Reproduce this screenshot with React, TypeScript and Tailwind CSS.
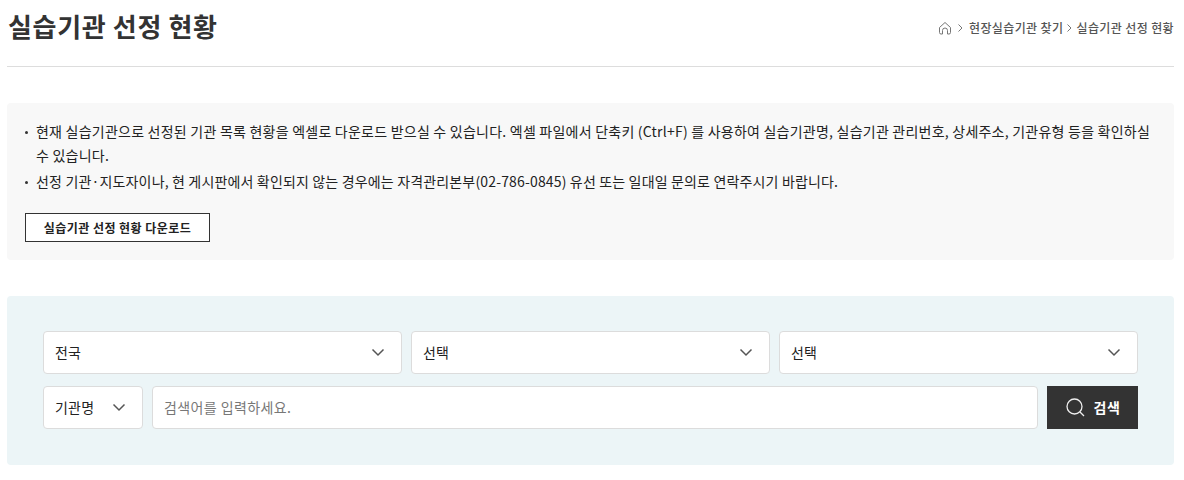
import React from "react";

const Chevron = ({ className }: { className?: string }) => (
  <svg className={className} width="14" height="9" viewBox="0 0 14 9" fill="none" stroke="#555" strokeWidth="1.5">
    <path d="M1.5 1.5 L7 7 L12.5 1.5" />
  </svg>
);

const Select = ({ label }: { label: string }) => (
  <div className="flex h-[43px] flex-1 items-center justify-between rounded-[4px] border border-[#dcdcdc] bg-white pl-[11px] pr-[16px] text-[14px] tracking-[0.2px] text-[#222]">
    <span>{label}</span>
    <Chevron />
  </div>
);

export default function App() {
  return (
    <div className="h-[480px] overflow-hidden bg-white px-[7px] pr-[10px] font-['Noto_Sans_CJK_KR','Noto_Sans',sans-serif] text-[#333]">
      <header className="flex h-[67px] items-start justify-between border-b border-[#dddddd]">
        <h1 className="pl-[1px] pt-[4px] text-[26px] font-bold leading-[44px] tracking-[0.65px] text-[#333]">실습기관 선정 현황</h1>
        <nav className="flex items-center pt-[19px] text-[12px] font-medium leading-[18px] tracking-[0.38px] text-[#555]">
          <svg width="14" height="14" viewBox="0 0 14 14" fill="none" stroke="#777" strokeWidth="1" className="mr-[6px]">
            <path d="M1.5 6.5 L7 1.5 L12.5 6.5 V11.5 Q12.5 13 11 13 H9.5 V9.5 Q9.5 7 7 7 Q4.5 7 4.5 9.5 V13 H3 Q1.5 13 1.5 11.5 Z" />
          </svg>
          <svg width="5" height="8" viewBox="0 0 5 8" fill="none" stroke="#777" className="mr-[6px]"><path d="M0.5 0.5 L4 4 L0.5 7.5" /></svg>
          <span>현장실습기관 찾기</span>
          <svg width="5" height="8" viewBox="0 0 5 8" fill="none" stroke="#777" className="mx-[4px]"><path d="M0.5 0.5 L4 4 L0.5 7.5" /></svg>
          <span>실습기관 선정 현황</span>
        </nav>
      </header>

      <section className="mt-[36px] h-[157px] rounded-[4px] bg-[#f8f8f8] pl-[18px] pr-[18px] pt-[16px]">
        <ul className="text-[14px] leading-[24px] text-[#222]">
          <li className="relative pl-[11px] tracking-[0.23px]">
            <span className="absolute left-0 top-[12px] h-[3px] w-[3px] rounded-full bg-[#333]" />
            현재 실습기관으로 선정된 기관 목록 현황을 엑셀로 다운로드 받으실 수 있습니다. 엑셀 파일에서 단축키 (Ctrl+F) 를 사용하여 실습기관명, 실습기관 관리번호, 상세주소, 기관유형 등을 확인하실 수 있습니다.
          </li>
          <li className="relative mt-[2px] pl-[11px] tracking-[0.16px]">
            <span className="absolute left-0 top-[12px] h-[3px] w-[3px] rounded-full bg-[#333]" />
            선정 기관·지도자이나, 현 게시판에서 확인되지 않는 경우에는 자격관리본부(02-786-0845) 유선 또는 일대일 문의로 연락주시기 바랍니다.
          </li>
        </ul>
        <button className="mt-[20px] flex h-[29px] w-[185px] items-center justify-center border border-[#333] bg-white text-[12px] font-semibold tracking-[0.45px] text-[#222]">
          실습기관 선정 현황 다운로드
        </button>
      </section>

      <section className="mt-[36px] h-[169px] rounded-[4px] bg-[#ecf5f7] px-[36px] pt-[35px]">
        <div className="flex gap-[9px]">
          <Select label="전국" />
          <Select label="선택" />
          <Select label="선택" />
        </div>
        <div className="mt-[12px] flex gap-[9px]">
          <div className="flex h-[43px] w-[100px] items-center justify-between rounded-[4px] border border-[#dcdcdc] bg-white pl-[11px] pr-[16px] text-[14px] tracking-[0.2px] text-[#222]">
            <span>기관명</span>
            <Chevron />
          </div>
          <div className="flex h-[43px] flex-1 items-center rounded-[4px] border border-[#dcdcdc] bg-white pl-[11px] text-[14px] tracking-[0.4px] text-[#777]">
            검색어를 입력하세요.
          </div>
          <button className="flex h-[43px] w-[91px] items-center justify-center gap-[9px] bg-[#333] pl-[1px] text-[14px] font-bold tracking-[0.5px] text-white">
            <svg width="19" height="19" viewBox="0 0 19 19" fill="none" stroke="#eee" strokeWidth="1.3">
              <circle cx="8.5" cy="8.5" r="7.5" />
              <path d="M14 14 L18 18" />
            </svg>
            검색
          </button>
        </div>
      </section>
    </div>
  );
}
